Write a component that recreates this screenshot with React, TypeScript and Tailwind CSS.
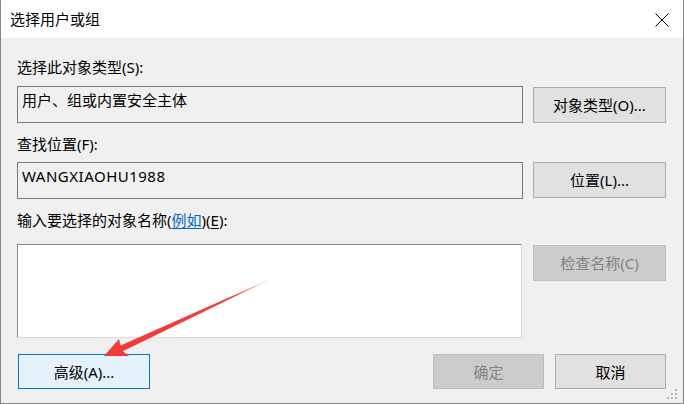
import React from "react";

type Kind = "normal" | "disabled" | "focus";

const kinds: Record<Kind, string> = {
  normal: "bg-[#e1e1e1] border-[#adadad] text-black",
  disabled: "bg-[#cccccc] border-[#bfbfbf] text-[#838383]",
  focus: "bg-[#e5f1fb] border-[#0078d7] text-black",
};

const WinButton = ({
  kind = "normal",
  className = "",
  children,
}: {
  kind?: Kind;
  className?: string;
  children: React.ReactNode;
}) => (
  <div
    className={`flex items-center justify-center border text-[15px] leading-5 ${kinds[kind]} ${className}`}
  >
    {children}
  </div>
);

const Label = ({ className = "", children }: { className?: string; children: React.ReactNode }) => (
  <div className={`h-5 text-[15px] leading-5 text-black ${className}`}>{children}</div>
);

const ReadOnlyBox = ({ className = "", children }: { className?: string; children: React.ReactNode }) => (
  <div
    className={`flex-1 h-[37px] border border-[#7a7a7a] bg-[#f0f0f0] pl-1 pt-[3px] text-[15px] leading-5 text-black ${className}`}
  >
    {children}
  </div>
);

export default function App() {
  return (
    <div className="relative flex h-[404px] w-[684px] flex-col overflow-hidden border-x border-b border-[#858585] bg-[#f0f0f0] font-['Noto_Sans','Noto_Sans_CJK_SC',sans-serif]">
      {/* title bar */}
      <div className="flex h-[38px] shrink-0 items-center justify-between bg-white pl-[9px] pr-[14px]">
        <span className="text-[15px] leading-5 text-black">选择用户或组</span>
        <svg width="14" height="14" viewBox="0 0 14 14" className="mt-px">
          <path d="M0.5 0.5 L13.5 13.5 M13.5 0.5 L0.5 13.5" stroke="#000" strokeWidth="1" fill="none" />
        </svg>
      </div>

      {/* body */}
      <div className="flex flex-1 flex-col pl-4 pr-[17px] pt-[19px]">
        <Label>选择此对象类型(S):</Label>
        <div className="mt-[9px] flex gap-[10px]">
          <ReadOnlyBox>用户、组或内置安全主体</ReadOnlyBox>
          <WinButton className="mt-px h-[36px] w-[133px]">对象类型(O)...</WinButton>
        </div>

        <Label className="mt-[11px]">查找位置(F):</Label>
        <div className="mt-[8px] flex gap-[10px]">
          <ReadOnlyBox className="tracking-[0.5px]">WANGXIAOHU1988</ReadOnlyBox>
          <WinButton className="h-[36px] w-[133px]">位置(L)...</WinButton>
        </div>

        <Label className="mt-[11px]">
          输入要选择的对象名称(
          <span className="text-[#0066cc] underline underline-offset-2">例如</span>)(
          <span className="underline underline-offset-2">E</span>):
        </Label>
        <div className="mt-[14px] flex gap-[11px]">
          <div className="h-[94px] flex-1 border-l border-t border-b border-r border-l-[#8c8c8c] border-t-[#8c8c8c] border-b-[#dcdcdc] border-r-[#dcdcdc] bg-white" />
          <WinButton kind="disabled" className="mt-px h-[36px] w-[133px]">
            检查名称(C)
          </WinButton>
        </div>

        <div className="mt-[16px] flex items-center">
          <WinButton kind="focus" className="ml-px h-[35px] w-[132px]">
            高级(A)...
          </WinButton>
          <div className="flex-1" />
          <WinButton kind="disabled" className="h-[35px] w-[111px]">
            确定
          </WinButton>
          <WinButton className="ml-[11px] h-[35px] w-[111px]">取消</WinButton>
        </div>
      </div>

      {/* size grip */}
      <svg width="14" height="14" viewBox="0 0 14 14" className="absolute bottom-[2px] right-[4px]">
        <g fill="#b5b5b5">
          <rect x="10" y="2" width="2" height="2" />
          <rect x="6" y="6" width="2" height="2" />
          <rect x="10" y="6" width="2" height="2" />
          <rect x="2" y="10" width="2" height="2" />
          <rect x="6" y="10" width="2" height="2" />
          <rect x="10" y="10" width="2" height="2" />
        </g>
      </svg>

      {/* red annotation arrow */}
      <svg
        className="pointer-events-none absolute left-0 top-0"
        width="684"
        height="404"
        viewBox="0 0 684 404"
      >
        <defs>
          <linearGradient id="fade" x1="104" y1="356" x2="272" y2="278" gradientUnits="userSpaceOnUse">
            <stop offset="0" stopColor="#f23b3b" />
            <stop offset="0.75" stopColor="#f23b3b" />
            <stop offset="1" stopColor="#f23b3b" stopOpacity="0.3" />
          </linearGradient>
        </defs>
        <polygon
          points="103,356 118,339 119.5,345.5 272,278 121.8,351.2 128,356"
          fill="url(#fade)"
        />
      </svg>
    </div>
  );
}
